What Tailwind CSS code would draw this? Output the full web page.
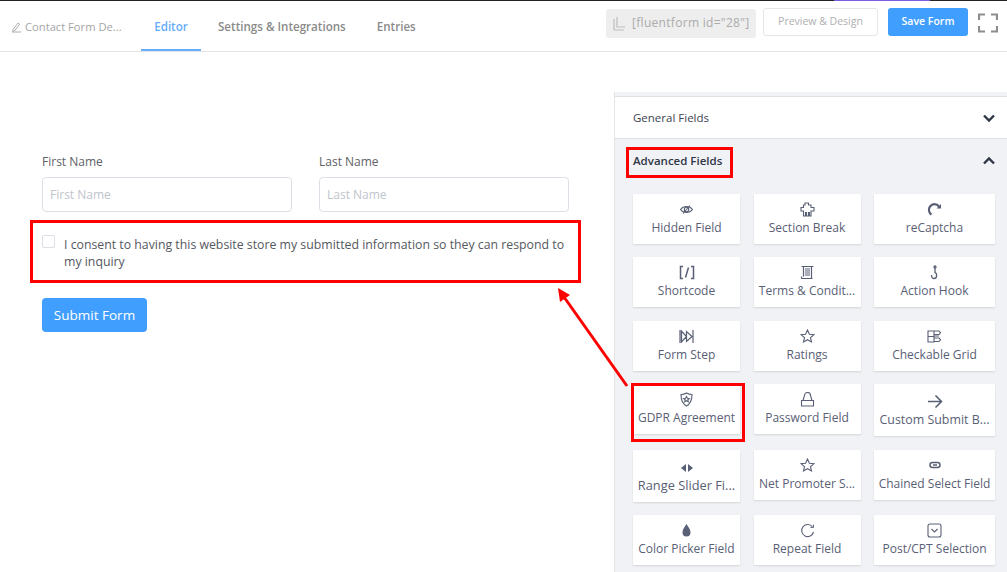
<!DOCTYPE html>
<html lang="en">
<head>
    <meta charset="UTF-8">
    <meta name="viewport" content="width=device-width, initial-scale=1.0">
    <title>Contact Form Demo - Editor</title>
    <script src="https://cdn.jsdelivr.net/npm/@tailwindcss/browser@4"></script>
</head>
<body class="relative h-[572px] w-[1007px] overflow-hidden bg-white font-['Open_Sans',sans-serif]">
    <!-- admin bar sliver -->
    <div class="flex h-px bg-[#1d2327]">
        <div class="ml-[834px] w-[96px] bg-[#7a5ce0]"></div>
    </div>

    <!-- top bar -->
    <header class="flex h-[51px] items-center border-b border-[#e4e4e4] pl-[11px] pr-[9px]">
        <div class="flex w-[130px] items-center gap-[2px] pt-[2px] text-[11.2px] text-[#a5a5a5]">
            <svg class="size-[12px]" viewBox="0 0 12 12" fill="none" stroke="#a5a5a5" stroke-width="0.9"><path d="M2 8.500 7 2l1.600 1.200-5 6.600-1.800.6z M1 11h9"/></svg>
            <span>Contact Form De...</span>
        </div>
        <nav class="flex h-full text-[11.600px] font-semibold text-[#8a8a8a]">
            <a class="flex w-[60px] items-center justify-center border-b-2 border-[#66adfa] pt-[4px] text-[#66adfa]">Editor</a>
            <a class="ml-[17px] flex items-center pt-[2px]">Settings &amp; Integrations</a>
            <a class="ml-[31px] flex items-center pt-[2px]">Entries</a>
        </nav>
        <div class="ml-auto flex -translate-y-[3px] items-center">
            <div class="flex h-[29px] w-[150px] items-center gap-[5px] rounded-[3px] bg-[#eeeeee] pl-[6px] text-[12px] tracking-[0.3px] text-[#ababab]">
                <svg class="size-[15px] shrink-0" viewBox="0 0 15 15" fill="none" stroke="#bdbdbd" stroke-width="1.200"><path d="M2 3v11h10 M5 1v10h8"/></svg>
                <span class="whitespace-nowrap">[fluentform id="28"]</span>
            </div>
            <button class="ml-[7px] h-[28px] w-[115px] -translate-y-[1px] rounded-[3px] border border-[#e6e6e6] bg-white text-[10.5px] text-[#b0b0b0]">Preview &amp; Design</button>
            <button class="ml-[10px] h-[28px] w-[80px] -translate-y-[1px] rounded-[3px] bg-[#409eff] text-[10.5px] font-semibold text-white">Save Form</button>
            <svg class="ml-[10px] size-[20px]" viewBox="0 0 20 20" fill="none" stroke="#8d8d8d" stroke-width="2.200"><path d="M1 7V1.500h6 M13 1.500h6V7 M1 13v5.500h6 M13 18.500h6V13"/></svg>
        </div>
    </header>

    <div class="flex h-[520px]">
        <!-- form preview -->
        <main class="w-[614px] pl-[42px] pr-[45px] pt-[101px]">
            <div class="grid grid-cols-[250px_250px] gap-x-[27px] text-[12px] text-[#606266]">
                <label class="block">
                    <span class="block leading-[18px]">First Name</span>
                    <input class="mt-[6px] h-[35px] w-full rounded-[4px] border border-[#dcdfe6] px-[7px] text-[12px] placeholder:text-[#c0c4cc]" placeholder="First Name">
                </label>
                <label class="block">
                    <span class="block leading-[18px]">Last Name</span>
                    <input class="mt-[6px] h-[35px] w-full rounded-[4px] border border-[#dcdfe6] px-[7px] text-[12px] placeholder:text-[#c0c4cc]" placeholder="Last Name">
                </label>
            </div>
            <div class="mt-[23px] flex items-start">
                <span class="size-[13px] shrink-0 rounded-[2px] border border-[#dcdfe6]"></span>
                <p class="ml-[9px] mt-[1px] w-[505px] text-[12.300px] font-medium leading-[17px] text-[#555860]">I consent to having this website store my submitted information so they can respond to my inquiry</p>
            </div>
            <button class="mt-[28px] h-[34px] w-[105px] rounded-[4px] bg-[#409eff] text-[13.500px] text-white">Submit Form</button>
        </main>

        <!-- field sidebar -->
        <aside class="mt-[40px] w-[393px] border-l border-[#e4e4e4] bg-[#f1f2f5] pt-[4px]">
            <div class="flex h-[43px] items-center justify-between border-y border-[#dfe1e6] bg-white pl-[18px] pr-[12px] text-[11.500px] font-medium text-[#3d4451]">
                <span>General Fields</span>
                <svg class="size-[12px]" viewBox="0 0 12 12" fill="none" stroke="#2f3747" stroke-width="2.400"><path d="M1 3.500l5 5 5-5"/></svg>
            </div>
            <div class="flex h-[44px] items-center justify-between pl-[18px] pr-[12px] text-[11.500px] font-semibold text-[#2f3747]">
                <span>Advanced Fields</span>
                <svg class="size-[12px]" viewBox="0 0 12 12" fill="none" stroke="#2f3747" stroke-width="2.400"><path d="M1 8.500l5-5 5 5"/></svg>
            </div>
            <div class="ml-[18px] mt-[11px] grid grid-cols-[107px_107px_121px] items-start gap-x-[13.500px] gap-y-[13.400px] text-center text-[12px] leading-[16px] text-[#596075]">
                <div class="flex h-[50px] flex-col items-center rounded-[1px] bg-white pt-[8px] shadow-[0_1px_2px_rgba(0,0,0,0.12)]">
                    <svg class="size-[15px]" viewBox="0 0 15 15" fill="none" stroke="#596075" stroke-width="1.100"><path d="M1.500 7.500c3-4 9-4 12 0-3 4-9 4-12 0z"/><circle cx="7.500" cy="7.500" r="2.200"/><path d="M4 11.500 11 3.500"/></svg>
                    <span class="mt-[3px]">Hidden Field</span>
                </div>
                <div class="flex h-[50px] flex-col items-center rounded-[1px] bg-white pt-[8px] shadow-[0_1px_2px_rgba(0,0,0,0.12)]">
                    <svg class="size-[15px]" viewBox="0 0 15 15" fill="none" stroke="#596075" stroke-width="1.100"><path d="M5 1h3.500v2h2.500v2.500h3v3.500h-3v5H9.500v-3.500h-1V14H6.500v-3.500h-1V14H3.500V9H1V5.500h2.500V3H5z"/></svg>
                    <span class="mt-[3px]">Section Break</span>
                </div>
                <div class="flex h-[50px] flex-col items-center rounded-[1px] bg-white pt-[8px] shadow-[0_1px_2px_rgba(0,0,0,0.12)]">
                    <svg class="size-[15px]" viewBox="0 0 15 15" fill="none" stroke="#596075" stroke-width="2.200"><path d="M4.500 12.500A5.500 5.500 0 0 1 3 4.500 5.500 5.500 0 0 1 12 4.500"/><path d="M9.500 6.500h4.500V2z" fill="#596075" stroke="none"/></svg>
                    <span class="mt-[3px]">reCaptcha</span>
                </div>

                <div class="flex h-[50px] flex-col items-center rounded-[1px] bg-white pt-[8px] shadow-[0_1px_2px_rgba(0,0,0,0.12)]">
                    <svg class="h-[15px] w-[16px]" viewBox="0 0 16 15" fill="none" stroke="#596075" stroke-width="1.500"><path d="M4 1.500H1.500v12H4 M12 1.500h2.500v12H12 M9.500 2.500l-3 10"/></svg>
                    <span class="mt-[3px]">Shortcode</span>
                </div>
                <div class="flex h-[50px] flex-col items-center rounded-[1px] bg-white pt-[8px] shadow-[0_1px_2px_rgba(0,0,0,0.12)]">
                    <svg class="size-[15px]" viewBox="0 0 15 15" fill="none" stroke="#596075" stroke-width="1.200"><path d="M1.500 1.500h12 M3.500 1.500v10 M11.500 1.500v12 M1.500 13.500h11 M1.500 11.500v2 M5 4h5 M5 6h5 M5 8h5 M5 10h5"/></svg>
                    <span class="mt-[3px]">Terms &amp; Condit...</span>
                </div>
                <div class="flex h-[50px] flex-col items-center rounded-[1px] bg-white pt-[8px] shadow-[0_1px_2px_rgba(0,0,0,0.12)]">
                    <svg class="size-[15px]" viewBox="0 0 15 15" fill="none" stroke="#596075" stroke-width="1.300"><circle cx="8" cy="2" r="1"/><path d="M8 3v4.500c2.500 1 2 6-.8 6C5 13.500 4.500 11.500 4.500 10"/></svg>
                    <span class="mt-[3px]">Action Hook</span>
                </div>

                <div class="flex h-[50px] flex-col items-center rounded-[1px] bg-white pt-[8px] shadow-[0_1px_2px_rgba(0,0,0,0.12)]">
                    <svg class="size-[15px]" viewBox="0 0 15 15" fill="none" stroke="#596075" stroke-width="1.200"><path d="M1 1v13 M14 1v13 M2.500 2v11L7.500 7.500z M7.500 2.500v10l5.500-5z"/></svg>
                    <span class="mt-[3px]">Form Step</span>
                </div>
                <div class="flex h-[50px] flex-col items-center rounded-[1px] bg-white pt-[8px] shadow-[0_1px_2px_rgba(0,0,0,0.12)]">
                    <svg class="size-[15px]" viewBox="0 0 15 15" fill="none" stroke="#596075" stroke-width="1.100"><path d="M7.500 1l1.900 4.200 4.600.4-3.500 3 1 4.400-4-2.300-4 2.300 1-4.400-3.500-3 4.600-.4z"/></svg>
                    <span class="mt-[3px]">Ratings</span>
                </div>
                <div class="flex h-[50px] flex-col items-center rounded-[1px] bg-white pt-[8px] shadow-[0_1px_2px_rgba(0,0,0,0.12)]">
                    <svg class="size-[15px]" viewBox="0 0 15 15" fill="none" stroke="#596075" stroke-width="1.100"><path d="M1 2h6v11H1z M1 7.500h6 M7 2h5l1.500 1.800L12 5.500H7 M7 7h5 M7 9h5l1.500 1.800L12 12.500H7"/></svg>
                    <span class="mt-[3px]">Checkable Grid</span>
                </div>

                <div class="flex h-[50px] flex-col items-center rounded-[1px] bg-white pt-[8px] shadow-[0_1px_2px_rgba(0,0,0,0.12)]">
                    <svg class="size-[15px]" viewBox="0 0 15 15" fill="none" stroke="#596075" stroke-width="1.100"><path d="M7.500 1c1.500 1 3.500 1.500 5.500 1.500 0 5.500-1 9-5.500 11.500C3 11.500 2 8 2 2.500 4 2.500 6 2 7.500 1z"/><path d="M7.500 4.500l.9 1.800 1.900.2-1.400 1.300.4 1.900-1.800-1-1.800 1 .4-1.900-1.400-1.300 1.900-.2z"/></svg>
                    <span class="mt-[3px]">GDPR Agreement</span>
                </div>
                <div class="flex h-[50px] flex-col items-center rounded-[1px] bg-white pt-[8px] shadow-[0_1px_2px_rgba(0,0,0,0.12)]">
                    <svg class="size-[15px]" viewBox="0 0 15 15" fill="none" stroke="#596075" stroke-width="1.100"><path d="M1.500 14V8.500h12V14z M3 8.500 4.500 3.500a3 3 0 0 1 6 0L12 8.500"/></svg>
                    <span class="mt-[3px]">Password Field</span>
                </div>
                <div class="flex h-[52px] flex-col items-center rounded-[1px] bg-white pt-[10px] shadow-[0_1px_2px_rgba(0,0,0,0.12)]">
                    <svg class="h-[15px] w-[16px]" viewBox="0 0 16 15" fill="none" stroke="#596075" stroke-width="1.600"><path d="M1 7.500h13.500 M8.500 1.500l6 6-6 6"/></svg>
                    <span class="mt-[3px] text-[12.400px]">Custom Submit B...</span>
                </div>

                <div class="flex h-[52px] flex-col items-center rounded-[1px] bg-white pt-[14px] shadow-[0_1px_2px_rgba(0,0,0,0.12)]">
                    <svg class="h-[8px] w-[12px]" viewBox="0 0 12 8" fill="#596075"><path d="M5 0v8L0 4z M7 0v8l5-4z"/></svg>
                    <span class="mt-[5px] text-[12.800px]">Range Slider Fi...</span>
                </div>
                <div class="flex h-[50px] flex-col items-center rounded-[1px] bg-white pt-[8px] shadow-[0_1px_2px_rgba(0,0,0,0.12)]">
                    <svg class="size-[15px]" viewBox="0 0 15 15" fill="none" stroke="#596075" stroke-width="1.100"><path d="M7.500 1l1.900 4.200 4.600.4-3.500 3 1 4.400-4-2.300-4 2.300 1-4.400-3.500-3 4.600-.4z"/></svg>
                    <span class="mt-[3px]">Net Promoter S...</span>
                </div>
                <div class="flex h-[50px] flex-col items-center rounded-[1px] bg-white pt-[11px] shadow-[0_1px_2px_rgba(0,0,0,0.12)]">
                    <svg class="h-[8px] w-[12px]" viewBox="0 0 12 8" fill="none" stroke="#596075" stroke-width="1.500"><rect x="1" y="1.500" width="10" height="5" rx="2.500"/><path d="M4 4h4"/></svg>
                    <span class="mt-[7px]">Chained Select Field</span>
                </div>

                <div class="flex h-[50px] flex-col items-center rounded-[1px] bg-white pt-[8px] shadow-[0_1px_2px_rgba(0,0,0,0.12)]">
                    <svg class="size-[15px]" viewBox="0 0 15 15" fill="#596075"><path d="M7.500 1c1.500 3 4 5 4 8.500a4 4 0 0 1-8 0C3.500 6 6 4 7.500 1z"/></svg>
                    <span class="mt-[3px]">Color Picker Field</span>
                </div>
                <div class="flex h-[50px] flex-col items-center rounded-[1px] bg-white pt-[8px] shadow-[0_1px_2px_rgba(0,0,0,0.12)]">
                    <svg class="size-[15px]" viewBox="0 0 15 15" fill="none" stroke="#596075" stroke-width="1.100"><path d="M12.500 4A6 6 0 1 0 13.500 9"/><path d="M13.500 1.500V4.500H10.500" stroke-width="0.900"/></svg>
                    <span class="mt-[3px]">Repeat Field</span>
                </div>
                <div class="flex h-[50px] flex-col items-center rounded-[1px] bg-white pt-[8px] shadow-[0_1px_2px_rgba(0,0,0,0.12)]">
                    <svg class="size-[15px]" viewBox="0 0 15 15" fill="none" stroke="#596075" stroke-width="1.100"><rect x="1" y="1" width="13" height="13" rx="2"/><path d="M4.500 6l3 3 3-3"/></svg>
                    <span class="mt-[3px]">Post/CPT Selection</span>
                </div>
            </div>
        </aside>
    </div>

    <!-- red annotations over the screenshot -->
    <div class="absolute left-[30px] top-[220px] h-[63px] w-[551px] border-[3px] border-[#ff0000]"></div>
    <div class="absolute left-[626px] top-[147px] h-[31px] w-[107px] border-[3px] border-[#ff0000]"></div>
    <div class="absolute left-[631px] top-[383px] h-[59px] w-[114px] border-[3px] border-[#ff0000]"></div>
    <svg class="absolute left-0 top-0" width="1007" height="572" fill="none">
        <path d="M627 386 564 297" stroke="#ff0000" stroke-width="3"/>
        <path d="M558 288 560 302 570 295z" fill="#ff0000"/>
    </svg>
</body>
</html>
